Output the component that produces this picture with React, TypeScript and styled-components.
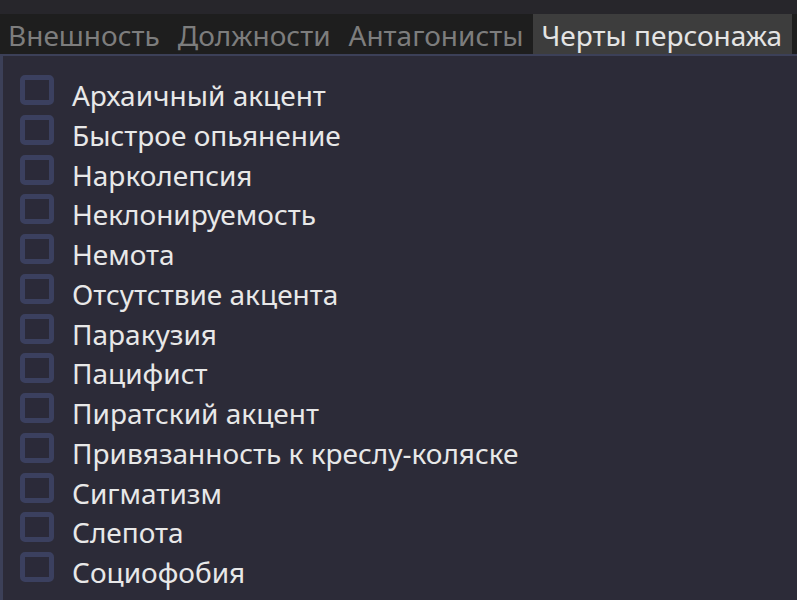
import styled, { createGlobalStyle } from "styled-components";

const GlobalStyle = createGlobalStyle`
  html, body {
    margin: 0;
    padding: 0;
    background: #27262b;
  }
  #root {
    height: 600px;
  }
`;

const Screen = styled.div`
  height: 600px;
  display: flex;
  flex-direction: column;
  padding-top: 14px;
  box-sizing: border-box;
  font-family: "Noto Sans", "Open Sans", sans-serif;
  font-size: 28px;
  overflow: hidden;
`;

const TabBar = styled.div`
  display: flex;
  height: 40px;
  background: #1e1e1e;
`;

const Tab = styled.div<{ $active?: boolean }>`
  display: flex;
  align-items: center;
  padding: 2px 10px 0 8px;
  color: ${(p) => (p.$active ? "#e4e4e4" : "#7d7d7d")};
  background: ${(p) => (p.$active ? "#3d3d3d" : "transparent")};
  white-space: nowrap;
`;

const Panel = styled.div`
  flex: 1;
  background: #2c2b38;
  border-top: 2px solid #3c4058;
  border-left: 3px solid #3c4058;
  padding: 18px 0 0 17px;
`;

const Row = styled.label`
  display: flex;
  align-items: flex-start;
  height: 39.75px;
  gap: 18px;
`;

const Box = styled.span`
  width: 24px;
  height: 20px;
  margin-top: 1px;
  border: 5px solid #3b405f;
  border-radius: 5px;
  background: #2b2a39;
  flex-shrink: 0;
`;

const Label = styled.span`
  color: #e8e8e8;
  line-height: 39.75px;
  padding-top: 2px;
  white-space: nowrap;
`;

const tabs = ["Внешность", "Должности", "Антагонисты", "Черты персонажа"];

const traits = [
  "Архаичный акцент",
  "Быстрое опьянение",
  "Нарколепсия",
  "Неклонируемость",
  "Немота",
  "Отсутствие акцента",
  "Паракузия",
  "Пацифист",
  "Пиратский акцент",
  "Привязанность к креслу-коляске",
  "Сигматизм",
  "Слепота",
  "Социофобия",
];

export default function App() {
  return (
    <>
      <GlobalStyle />
      <Screen>
        <TabBar>
          {tabs.map((t, i) => (
            <Tab key={t} $active={i === tabs.length - 1}>
              {t}
            </Tab>
          ))}
        </TabBar>
        <Panel>
          {traits.map((t) => (
            <Row key={t}>
              <Box />
              <Label>{t}</Label>
            </Row>
          ))}
        </Panel>
      </Screen>
    </>
  );
}
